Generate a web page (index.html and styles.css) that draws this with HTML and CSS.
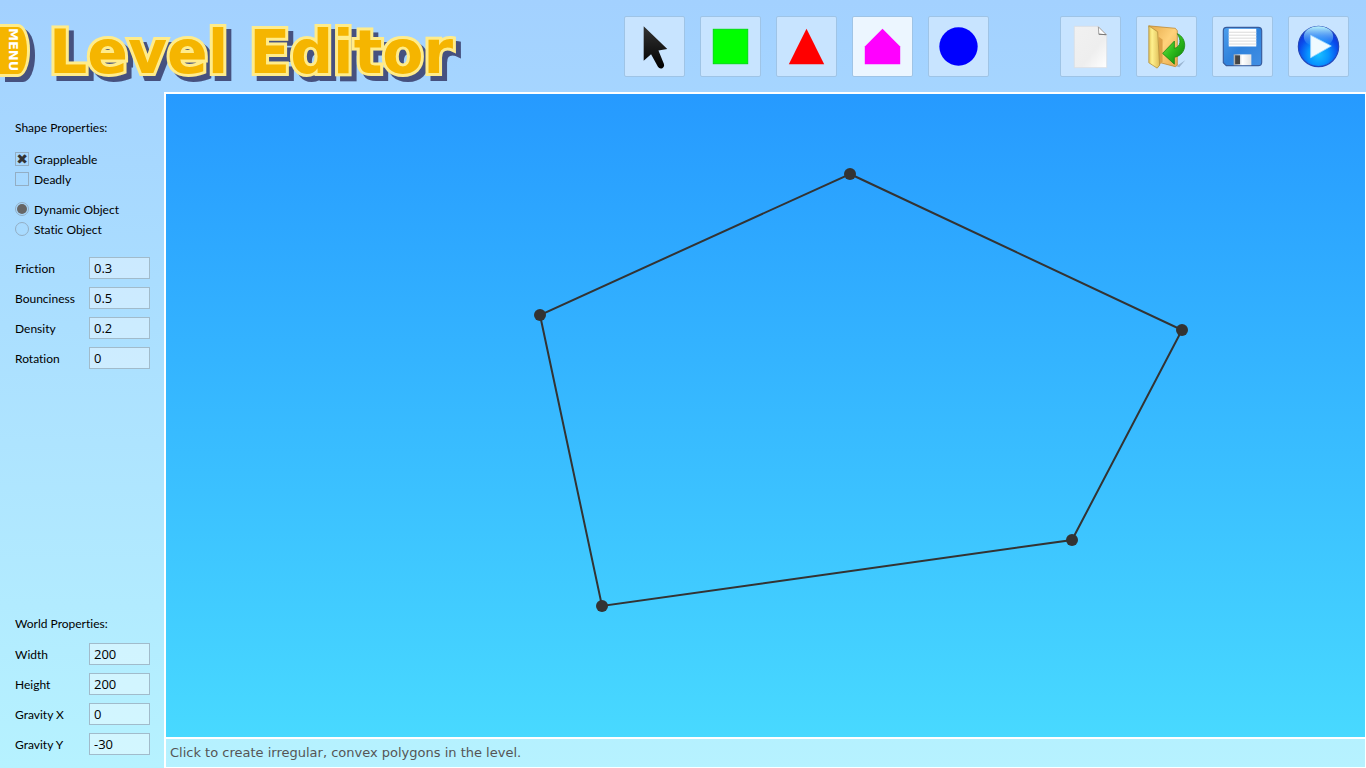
FILE: index.html
```html
<!DOCTYPE html>
<html lang="en">
<head>
<meta charset="utf-8">
<title>Level Editor</title>
<link rel="stylesheet" href="styles.css">
</head>
<body>
<div class="editor">
  <header class="topbar">
    <button class="menu-tab" type="button"><span class="menu-label">MENU</span></button>
    <h1 class="title">Level Editor</h1>
    <div class="toolbar">
      <div class="tools">
        <button class="tool" type="button" aria-label="Select">
          <svg viewBox="0 0 60 60"><defs><linearGradient id="arrow" x1="0" y1="0" x2="0" y2="1"><stop offset="0" stop-color="#333"/><stop offset="1" stop-color="#000"/></linearGradient></defs><path d="M19 9.500V44.500L26.500 38L33.500 50.500Q35 53 38 52Q40.500 50.500 39.500 47.500L34 34L43 32.500Z" fill="url(#arrow)"/></svg>
        </button>
        <button class="tool" type="button" aria-label="Rectangle">
          <svg viewBox="0 0 60 60"><rect x="12.500" y="12.500" width="35" height="35" fill="#0f0" stroke="#00dc0c"/></svg>
        </button>
        <button class="tool" type="button" aria-label="Triangle">
          <svg viewBox="0 0 60 60"><path d="M30 12L48 48H12Z" fill="#f00"/></svg>
        </button>
        <button class="tool active" type="button" aria-label="Polygon" aria-pressed="true">
          <svg viewBox="0 0 60 60"><path d="M30 12L48 30V48H12V30Z" fill="#f0f"/></svg>
        </button>
        <button class="tool" type="button" aria-label="Circle">
          <svg viewBox="0 0 60 60"><circle cx="30" cy="30" r="19.500" fill="#00f"/></svg>
        </button>
      </div>
      <div class="tools">
        <button class="tool" type="button" aria-label="New level">
          <svg viewBox="0 0 60 60"><defs><linearGradient id="page" x1="0" y1="0" x2="1" y2="1"><stop offset="0" stop-color="#f1f1f1"/><stop offset=".6" stop-color="#eee"/><stop offset="1" stop-color="#fff"/></linearGradient></defs><path d="M13.500 9.500H38L46.500 18V51.500H13.500Z" fill="url(#page)" stroke="#d9dde2" stroke-width=".8"/><path d="M38 10L46 18L38.500 17.500Z" fill="#fff" stroke="#888" stroke-width=".8"/><path d="M38.500 17.500L46 18" stroke="#777"/></svg>
        </button>
        <button class="tool" type="button" aria-label="Open level">
          <svg viewBox="0 0 60 60"><defs><linearGradient id="flap" x1="0" y1="0" x2="1" y2="0"><stop offset="0" stop-color="#e2c55b"/><stop offset=".3" stop-color="#fff18e"/><stop offset="1" stop-color="#dfbd58"/></linearGradient><linearGradient id="back" x1="0" y1="0" x2="1" y2="1"><stop offset="0" stop-color="#e5a94a"/><stop offset=".5" stop-color="#ffd27b"/><stop offset="1" stop-color="#e8a94d"/></linearGradient><linearGradient id="green" x1="0" y1="0" x2="1" y2="1"><stop offset="0" stop-color="#8bea58"/><stop offset=".5" stop-color="#2fbc1c"/><stop offset="1" stop-color="#067d08"/></linearGradient></defs><path d="M40 50L49 44L43 51Z" fill="#536b86" opacity=".4"/><path d="M12 9L39 11.500L41 14V49L39 50.500L22 46Z" fill="url(#back)" stroke="#bd8a37" stroke-width=".8"/><path d="M22 20L26 23V45L22 50Z" fill="#dca148"/><path d="M12 9L21 15L23 49L20.500 52L12 46.500Z" fill="url(#flap)" stroke="#b2903c" stroke-width=".8"/><path d="M41 17C51 21 52 38 38 41V48L26 37L38 24.500V32C45 30 45 23 41 17Z" fill="url(#green)" stroke="#19850f" stroke-width=".8"/></svg>
        </button>
        <button class="tool" type="button" aria-label="Save level">
          <svg viewBox="0 0 60 60"><defs><linearGradient id="disk" x1="0" y1="0" x2="1" y2="1"><stop offset="0" stop-color="#4d9fed"/><stop offset=".5" stop-color="#2f82dc"/><stop offset="1" stop-color="#438fe4"/></linearGradient><linearGradient id="metal" x1="0" y1="0" x2="1" y2="0"><stop offset="0" stop-color="#a5a5a5"/><stop offset=".5" stop-color="#fff"/><stop offset="1" stop-color="#e2e2e2"/></linearGradient></defs><path d="M14 10.500H46Q49.500 10.500 49.500 14V46Q49.500 49.500 46 49.500H13.500L10.500 46.500V14Q10.500 10.500 14 10.500Z" fill="url(#disk)" stroke="#385d9e" stroke-width="1.200"/><rect x="16" y="12" width="28" height="18" fill="#fff"/><path d="M16 15.500H44M16 18.500H44M16 21.500H44M16 24.500H44M16 27.500H44" stroke="#dadada"/><rect x="21" y="38" width="18" height="11" fill="url(#metal)"/><rect x="22.500" y="39" width="5" height="9" fill="#444"/></svg>
        </button>
        <button class="tool" type="button" aria-label="Play level">
          <svg viewBox="0 0 60 60"><defs><radialGradient id="ball" cx=".5" cy=".7" r=".65"><stop offset="0" stop-color="#18c0ff"/><stop offset=".4" stop-color="#0794ff"/><stop offset=".75" stop-color="#0a4cec"/><stop offset="1" stop-color="#1133d4"/></radialGradient><linearGradient id="shine" x1="0" y1="0" x2="0" y2="1"><stop offset="0" stop-color="#c2ffff" stop-opacity=".95"/><stop offset="1" stop-color="#3ba9ff" stop-opacity=".1"/></linearGradient></defs><circle cx="30" cy="30" r="20.500" fill="url(#ball)" stroke="#2347ba" stroke-width="1.200"/><ellipse cx="30" cy="20" rx="15" ry="10.500" fill="url(#shine)"/><path d="M22 18.500L43 29.500L22 41.500Z" fill="#effaff" stroke="#9bd7ff" stroke-width=".8" stroke-linejoin="round"/></svg>
        </button>
      </div>
    </div>
  </header>

  <aside class="sidebar">
    <form class="shape-form">
      <h2 class="heading">Shape Properties:</h2>
      <div class="choices">
        <label class="choice"><input class="tick" type="checkbox" checked>Grappleable</label>
        <label class="choice"><input class="tick" type="checkbox">Deadly</label>
      </div>
      <div class="choices">
        <label class="choice"><input class="dot" type="radio" name="body" checked>Dynamic Object</label>
        <label class="choice"><input class="dot" type="radio" name="body">Static Object</label>
      </div>
      <div class="fields">
        <label class="field">Friction<input class="value" type="text" value="0.3"></label>
        <label class="field">Bounciness<input class="value" type="text" value="0.5"></label>
        <label class="field">Density<input class="value" type="text" value="0.2"></label>
        <label class="field">Rotation<input class="value" type="text" value="0"></label>
      </div>
    </form>
    <form class="world-form">
      <h2 class="heading">World Properties:</h2>
      <div class="fields">
        <label class="field">Width<input class="value" type="text" value="200"></label>
        <label class="field">Height<input class="value" type="text" value="200"></label>
        <label class="field">Gravity X<input class="value" type="text" value="0"></label>
        <label class="field">Gravity Y<input class="value" type="text" value="-30"></label>
      </div>
    </form>
  </aside>

  <main class="stage">
    <svg class="drawing" aria-label="Polygon being drawn">
      <path d="M684 80L1016 236L906 446L436 512L374 221Z" fill="none" stroke="#333" stroke-width="2"/>
      <g fill="#333"><circle cx="684" cy="80" r="6"/><circle cx="1016" cy="236" r="6"/><circle cx="906" cy="446" r="6"/><circle cx="436" cy="512" r="6"/><circle cx="374" cy="221" r="6"/></g>
    </svg>
  </main>
  <footer class="status">Click to create irregular, convex polygons in the level.</footer>
</div>
</body>
</html>
```
FILE: styles.css
```css
* {
  box-sizing: border-box;
}

body {
  margin: 0;
  font-family: Lato, "Open Sans", sans-serif;
  font-size: 12px;
  font-variant-ligatures: none;
  color: #000;
}

.editor {
  display: grid;
  grid-template: 92px 1fr 29px / 164px 1fr;
  min-height: 100vh;
  background: linear-gradient(#a3d1ff, #b6f2ff);
}

.topbar {
  grid-column: 1 / -1;
  display: flex;
  align-items: center;
  padding: 0 17px 0 0;
}

.menu-tab {
  width: 30px;
  height: 53px;
  margin: 8px 19px 0 0;
  padding: 0 1px 0 0;
  display: flex;
  align-items: center;
  justify-content: center;
  border: 3px solid #ffec8b;
  border-left: 0;
  border-radius: 0 12px 12px 0 / 0 26px 26px 0;
  background: #f5b500;
  box-shadow: 5px 5px 0 #46517f;
}

.menu-label {
  writing-mode: vertical-rl;
  font: 700 13px/16px "DejaVu Sans", sans-serif;
  color: #fff;
}

.title {
  margin: 11px 0 0;
  font: 700 60px/70px "DejaVu Sans", sans-serif;
  color: #f5b500;
  -webkit-text-stroke: 6px #ffec8b;
  paint-order: stroke fill;
  filter: drop-shadow(5px 5px 0 #46517f);
  white-space: nowrap;
}

.toolbar {
  display: flex;
  gap: 71px;
  margin-left: auto;
}

.tools {
  display: flex;
  gap: 15px;
}

.tool {
  width: 61px;
  height: 61px;
  padding: 0;
  border: 1px solid #9fc4e6;
  border-radius: 2px;
  background: #c8e4ff;
}

.tool.active {
  background: #ecf6ff;
}

.tool svg {
  display: block;
  width: 100%;
  height: 100%;
}

.sidebar {
  display: flex;
  flex-direction: column;
  justify-content: space-between;
  grid-row: 2 / 4;
  padding: 26px 14px 13px 15px;
}

.heading {
  margin: 0;
  font-size: 12px;
  line-height: 20px;
  font-weight: 400;
}

.choices {
  margin-top: 10px;
}

.heading + .choices {
  margin-top: 11px;
}

.choice {
  display: flex;
  align-items: center;
  gap: 5px;
  height: 20px;
}

.tick,
.dot {
  appearance: none;
  display: grid;
  place-items: center;
  width: 14px;
  height: 14px;
  margin: 0;
  border: 1px solid #93aec4;
}

.dot {
  border-radius: 50%;
}

.tick:checked::before {
  content: "✖";
  font: 14px/12px "DejaVu Sans", sans-serif;
  color: #333;
}

.dot:checked::before {
  content: "";
  width: 10px;
  height: 10px;
  border-radius: 50%;
  background: #666;
}

.shape-form .fields {
  margin-top: 18px;
}

.world-form .fields {
  margin-top: 9px;
}

.fields {
  display: grid;
  gap: 8px;
}

.field {
  display: flex;
  align-items: center;
  justify-content: space-between;
  height: 22px;
}

.value {
  width: 61px;
  height: 22px;
  padding: 0 4px;
  border: 1px solid #a1bbcb;
  background: rgba(255, 255, 255, 0.4);
  font: 13px/20px "Open Sans", "Noto Sans", sans-serif;
  color: #000;
}

.stage {
  border: 2px solid #fff;
  border-width: 2px 1px 2px 2px;
  background: linear-gradient(#269aff, #48d9ff);
}

.drawing {
  display: block;
  width: 100%;
  height: 100%;
}

.status {
  border: solid #fff;
  border-width: 0 1px 1px 2px;
  padding: 0 4px;
  font: 13px/28px "DejaVu Sans", sans-serif;
  color: #555;
}
```
